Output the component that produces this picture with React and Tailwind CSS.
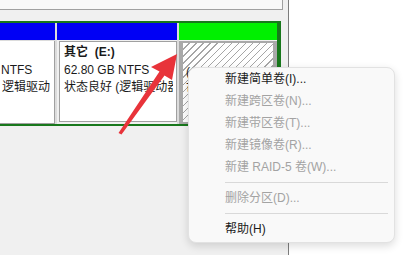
const menu = [
  { label: '新建简单卷(I)...', on: true },
  { label: '新建跨区卷(N)...' },
  { label: '新建带区卷(T)...' },
  { label: '新建镜像卷(R)...' },
  { label: '新建 RAID-5 卷(W)...' },
  { sep: true },
  { label: '删除分区(D)...' },
  { sep: true },
  { label: '帮助(H)', on: true },
]

function Arrow() {
  return (
    <svg className="absolute left-0 top-0 pointer-events-none" width="416" height="255">
      <polygon
        points="177,54 151,67 159.5,71.5 118.5,133 121.5,134.5 164.5,75.5 172,80"
        fill="#e8333a"
      />
    </svg>
  )
}

export default function App() {
  return (
    <div className="w-[416px] h-[255px] relative overflow-hidden flex bg-white font-['Liberation_Sans','Noto_Sans_CJK_SC',sans-serif] text-[12px] text-[#1a1a1a]">
      <div className="w-[289px] bg-[#f0f0f0] flex flex-col border-r border-[#7c7c7c]">
        <div className="h-[10px] mr-[5px] bg-[#f8f8f8] border-b border-r border-[#a0a0a0]" />
        <div className="h-[11px]" />

        <div className="w-[281px] h-[105px] flex gap-[2px] bg-[#dcdcdc] border-t-2 border-b-2 border-r-4 border-[#18781c]">
          <div className="w-[55px] flex flex-col">
            <div className="h-[17px] bg-[#0000f5]" />
            <div className="flex-1 mt-[1px] bg-white border-r border-b border-[#a0a0a0] pt-[3px] pr-[4px] leading-[17.5px]">
              <div className="h-full whitespace-nowrap overflow-hidden">
                <div className="h-[17.5px]" />
                <div className="pl-[1px]">NTFS</div>
                <div className="pl-[2px]">逻辑驱动器)</div>
              </div>
            </div>
          </div>

          <div className="w-[120px] flex flex-col bg-[#f0f0f0]">
            <div className="h-[17px] bg-[#0000f5]" />
            <div className="flex-1 mt-[1px] ml-[2px] mb-[2px] bg-white border border-[#a0a0a0] pl-[4px] pr-[3px] pt-[2px] leading-[17.5px]">
              <div className="h-full whitespace-nowrap overflow-hidden">
                <div className="font-bold">其它&nbsp;&nbsp;(E:)</div>
                <div>62.80 GB NTFS</div>
                <div>状态良好 (逻辑驱动器)</div>
              </div>
            </div>
          </div>

          <div className="w-[98px] flex flex-col bg-[#f0f0f0]">
            <div className="h-[17px] bg-[#00f000]" />
            <div className="flex-1 mt-[1px] border-l-4 border-r-4 border-t-2 border-b-2 border-[#a9a9a9] bg-[repeating-linear-gradient(135deg,#fff_0px,#fff_4px,#a6a6a6_4px,#a6a6a6_5px)] pl-[3px] pt-[3px] leading-[17.5px] whitespace-nowrap overflow-hidden">
              <div className="h-[17.5px]" />
              <div>(</div>
              <div>可用空间</div>
            </div>
          </div>
        </div>
      </div>
      <div className="flex-1 bg-white" />

      <Arrow />

      <div className="absolute left-[188px] top-[67px] w-[207px] rounded-[8px] bg-[#f9f9f9] border border-[#e2e2e2] shadow-[0_3px_8px_rgba(0,0,0,0.14)] pb-[2px]">
        {menu.map((m, i) =>
          m.sep ? (
            <div key={i} className="h-[9px] flex items-center ml-[36px] mr-[6px]">
              <div className="h-px w-full bg-[#d9d9d9]" />
            </div>
          ) : (
            <div
              key={i}
              className={`h-[22px] flex items-center pl-[36px] whitespace-nowrap ${m.on ? 'text-[#1b1b1b]' : 'text-[#a3a3a3]'}`}
            >
              {m.label}
            </div>
          )
        )}
      </div>
    </div>
  )
}
